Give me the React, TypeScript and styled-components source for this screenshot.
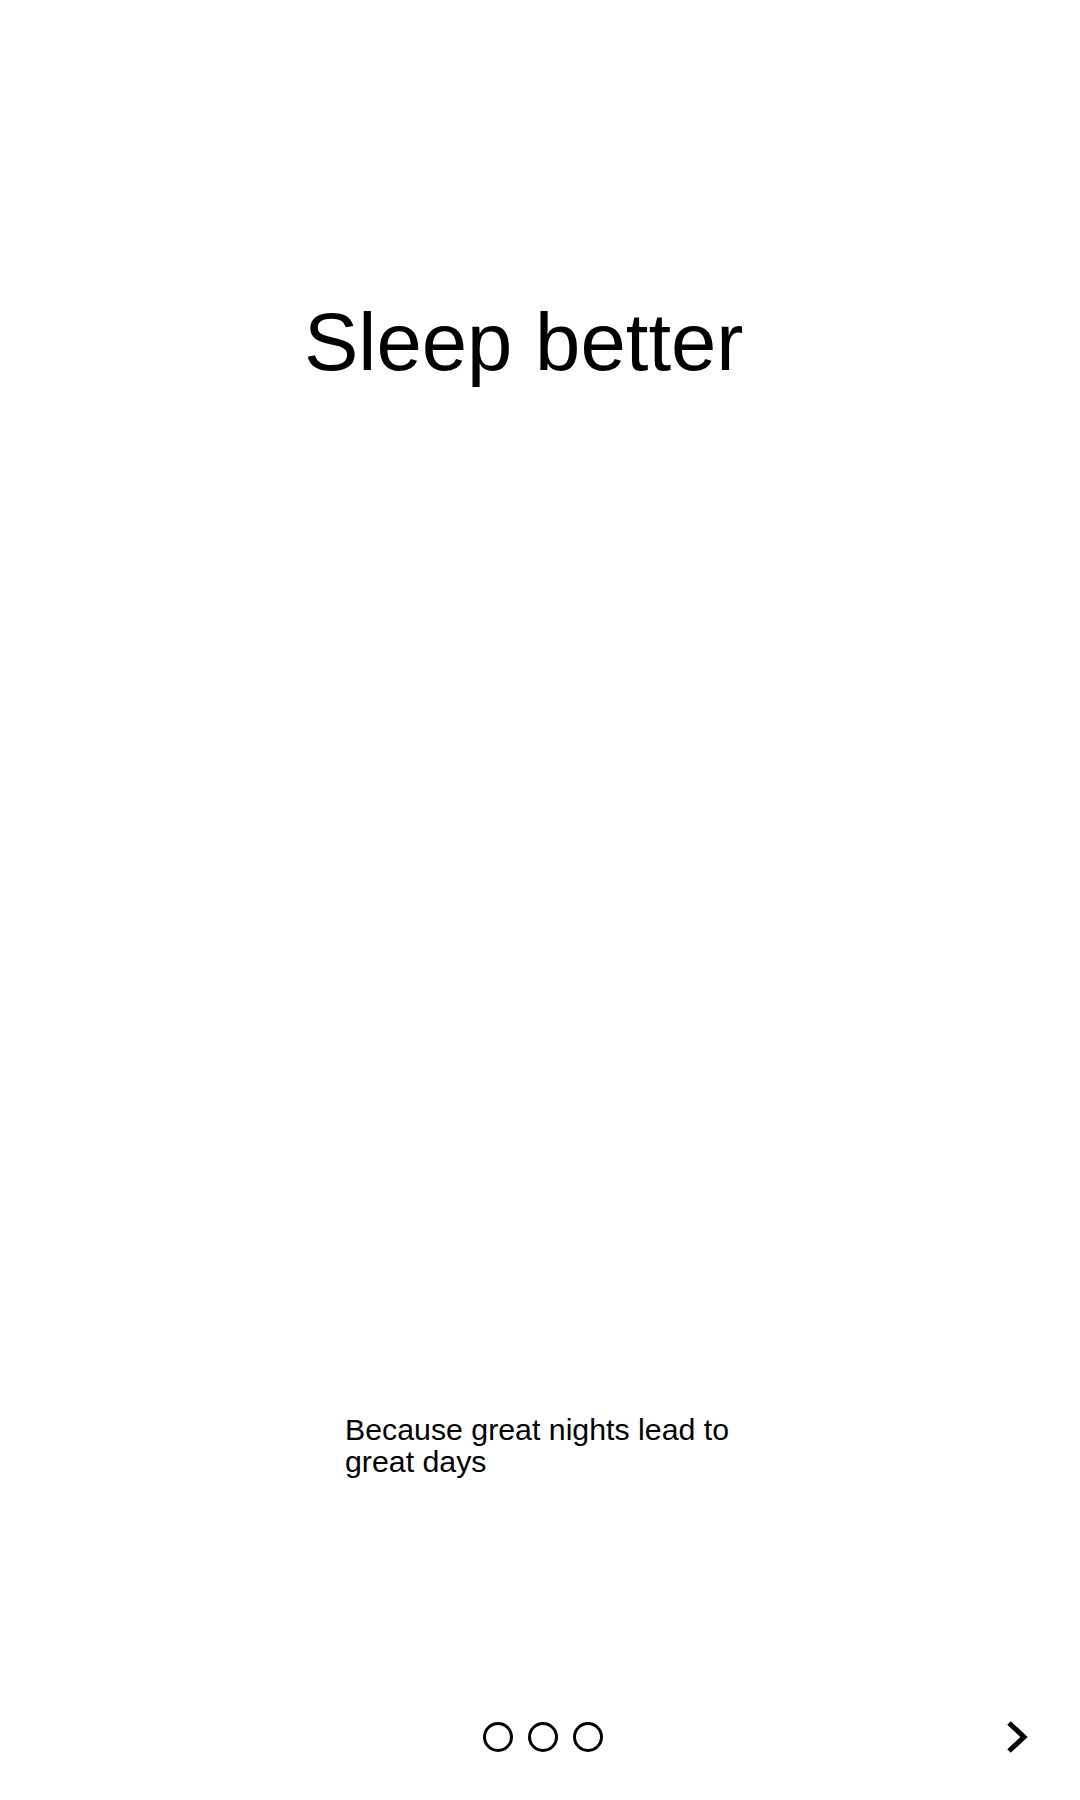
import React from "react";
import styled, { createGlobalStyle } from "styled-components";

const GlobalStyle = createGlobalStyle`
  html, body {
    margin: 0;
    padding: 0;
    background: #ffffff;
  }
  body {
    font-family: "Liberation Sans", Arial, sans-serif;
    color: #000000;
  }
`;

const Screen = styled.div`
  width: 1080px;
  height: 1800px;
  display: flex;
  flex-direction: column;
  background: #ffffff;
`;

const Title = styled.h1`
  margin: 301px 0 0 0;
  padding-left: 304px;
  font-size: 81.5px;
  line-height: 82px;
  font-weight: 400;
`;

const Tagline = styled.p`
  margin: 1031px 0 0 0;
  padding-left: 345px;
  width: 400px;
  font-size: 30.3px;
  line-height: 32px;
`;

const Footer = styled.div`
  margin-top: auto;
  margin-bottom: 33px;
  height: 60px;
  display: grid;
  grid-template-columns: 1fr auto 1fr;
  align-items: center;
  padding-left: 5px;
`;

const Dots = styled.div`
  grid-column: 2;
  display: flex;
  gap: 15px;
`;

const Dot = styled.span<{ $active?: boolean }>`
  width: 30px;
  height: 30px;
  box-sizing: border-box;
  border-radius: 50%;
  border: 3px solid #000000;
  background: ${(p) => (p.$active ? "#000000" : "transparent")};
`;

const NextButton = styled.button`
  grid-column: 3;
  justify-self: end;
  margin-right: 50px;
  padding: 0;
  border: none;
  background: none;
  cursor: pointer;
  display: flex;
  align-items: center;
`;

const Chevron = () => (
  <svg width="26" height="34" viewBox="0 0 26 34">
    <polyline
      points="5,3 20,17 5,31"
      fill="none"
      stroke="#000000"
      strokeWidth="5"
    />
  </svg>
);

export default function App() {
  return (
    <>
      <GlobalStyle />
      <Screen>
        <Title>Sleep better</Title>
        <Tagline>Because great nights lead to great days</Tagline>
        <Footer>
          <Dots>
            <Dot />
            <Dot />
            <Dot />
          </Dots>
          <NextButton aria-label="Next">
            <Chevron />
          </NextButton>
        </Footer>
      </Screen>
    </>
  );
}
